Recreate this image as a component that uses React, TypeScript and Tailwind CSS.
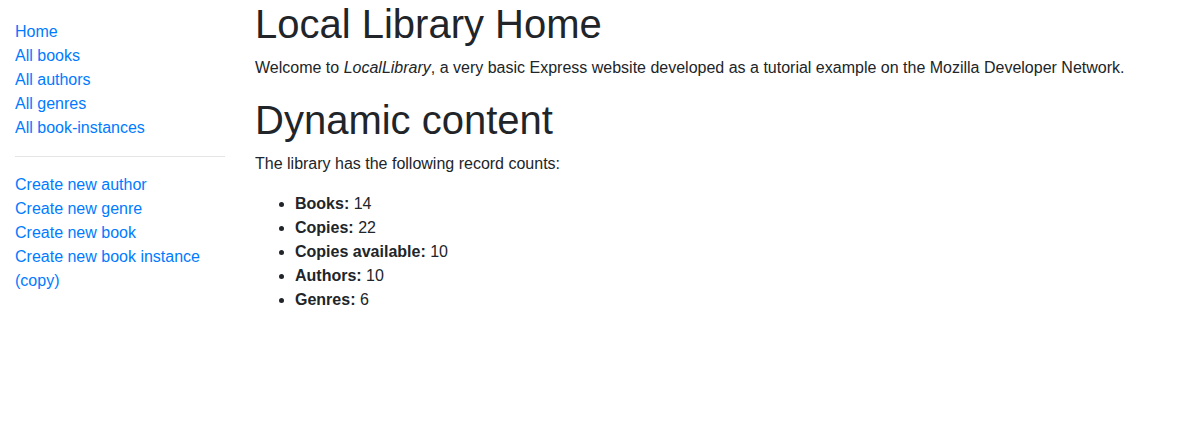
const browseLinks = ['Home', 'All books', 'All authors', 'All genres', 'All book-instances']
const createLinks = ['Create new author', 'Create new genre', 'Create new book', 'Create new book instance (copy)']

const counts = [
  { label: 'Books:', value: 14 },
  { label: 'Copies:', value: 22 },
  { label: 'Copies available:', value: 10 },
  { label: 'Authors:', value: 10 },
  { label: 'Genres:', value: 6 },
]

export default function App() {
  return (
    <div className="min-h-[438px] bg-white font-['Liberation_Sans',Arial,sans-serif] text-base leading-6 text-[#212529]">
      <div className="flex">
        {/* Sidebar */}
        <div className="w-[240px] shrink-0 px-[15px]">
          <ul className="mt-5 list-none p-0">
            {browseLinks.map((l) => (
              <li key={l}>
                <a href="#" className="text-[#007bff] hover:underline">
                  {l}
                </a>
              </li>
            ))}
            <li>
              <hr className="my-4 border-0 border-t border-[rgba(0,0,0,0.1)]" />
            </li>
            {createLinks.map((l) => (
              <li key={l}>
                <a href="#" className="text-[#007bff] hover:underline">
                  {l}
                </a>
              </li>
            ))}
          </ul>
        </div>

        {/* Main content */}
        <div className="flex-1 px-[15px]">
          <h1 className="mb-2 text-[40px] leading-[48px] font-normal">Local Library Home</h1>
          <p className="mb-4">
            Welcome to <em>LocalLibrary</em>, a very basic Express website developed as a tutorial example on the
            Mozilla Developer Network.
          </p>

          <h1 className="mb-2 text-[40px] leading-[48px] font-normal">Dynamic content</h1>
          <p className="mb-4">The library has the following record counts:</p>

          <ul className="mb-4 list-disc pl-10">
            {counts.map((c) => (
              <li key={c.label}>
                <strong className="font-bold">{c.label}</strong> {c.value}
              </li>
            ))}
          </ul>
        </div>
      </div>
    </div>
  )
}
